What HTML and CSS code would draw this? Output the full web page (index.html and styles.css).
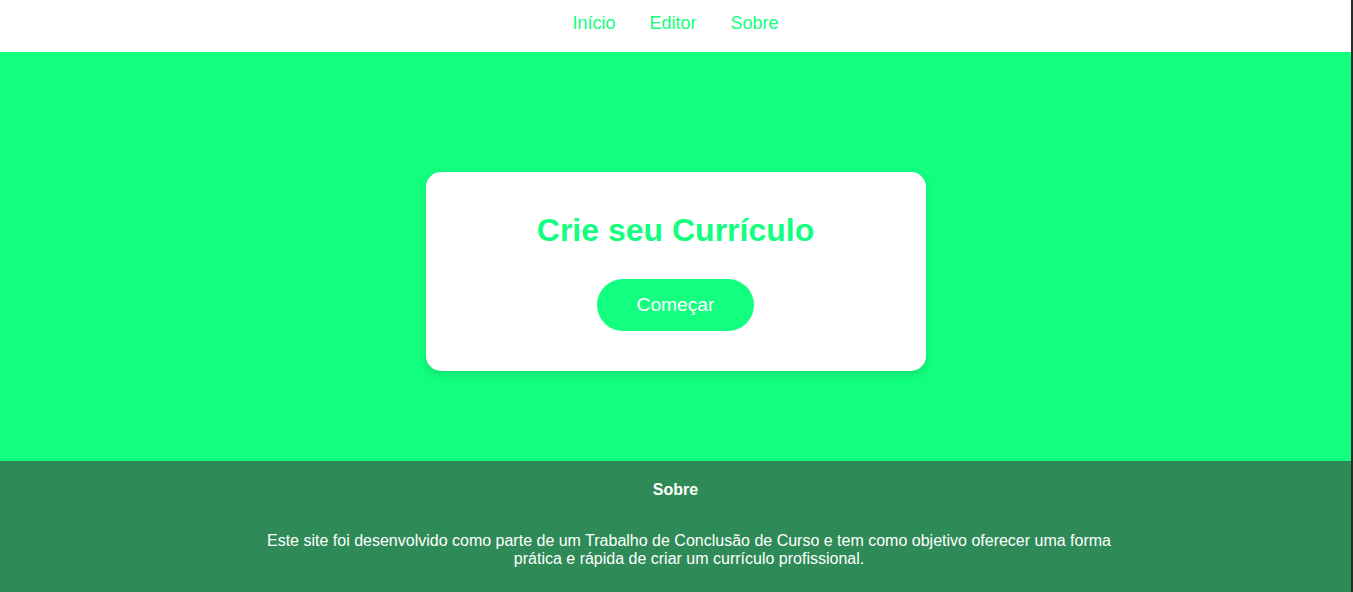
FILE: index.html
```html
<!DOCTYPE html>
<html lang="pt-BR">
<head>
<meta charset="utf-8">
<title>Crie seu Currículo</title>
<link rel="stylesheet" href="styles.css">
</head>
<body>
<div class="page">
  <nav class="topnav">
    <a href="#" class="nav-link">Início</a>
    <a href="#" class="nav-link">Editor</a>
    <a href="#" class="nav-link">Sobre</a>
  </nav>
  <main class="hero">
    <section class="card">
      <h2 class="card-title">Crie seu Currículo</h2>
      <a href="#" class="btn-start">Começar</a>
    </section>
  </main>
  <footer class="footer">
    <h4 class="footer-title">Sobre</h4>
    <p class="footer-text">Este site foi desenvolvido como parte de um Trabalho de Conclusão de Curso e tem como objetivo oferecer uma forma prática e rápida de criar um currículo profissional.</p>
  </footer>
</div>
</body>
</html>
```
FILE: styles.css
```css
html, body {
  margin: 0;
  padding: 0;
}
body {
  font-family: "Liberation Sans", Arial, sans-serif;
  background: #2a2a2a;
  overflow: hidden;
}
.page {
  margin-right: 2px;
  background: #ffffff;
}
.topnav {
  height: 52px;
  box-sizing: border-box;
  padding-top: 13px;
  display: flex;
  justify-content: center;
  gap: 34px;
  background: #ffffff;
}
.nav-link {
  color: #12ff80;
  text-decoration: none;
  font-size: 18px;
  line-height: 21px;
}
.hero {
  background: #12ff80;
  padding: 120px 0 90px;
  display: flex;
  justify-content: center;
}
.card {
  width: 500px;
  box-sizing: border-box;
  padding: 40px;
  background: #ffffff;
  border-radius: 15px;
  box-shadow: 0 4px 10px rgba(0, 0, 0, 0.12);
  display: flex;
  flex-direction: column;
  align-items: center;
}
.card-title {
  margin: 0 0 30px;
  font-size: 32px;
  line-height: 37px;
  font-weight: bold;
  color: #12ff80;
}
.btn-start {
  display: inline-block;
  padding: 15px 40px;
  font-size: 19.2px;
  line-height: 22px;
  color: #ffffff;
  background: #12ff80;
  border-radius: 26px;
  text-decoration: none;
}
.footer {
  background: #2e8b57;
  color: #ffffff;
  padding: 20px 0 25px;
  text-align: center;
}
.footer-title {
  margin: 0;
  font-size: 16px;
  line-height: 18px;
  font-weight: bold;
}
.footer-text {
  max-width: 860px;
  margin: 33px auto 0;
  padding-left: 27px;
  font-size: 16px;
  line-height: 18px;
}
```
